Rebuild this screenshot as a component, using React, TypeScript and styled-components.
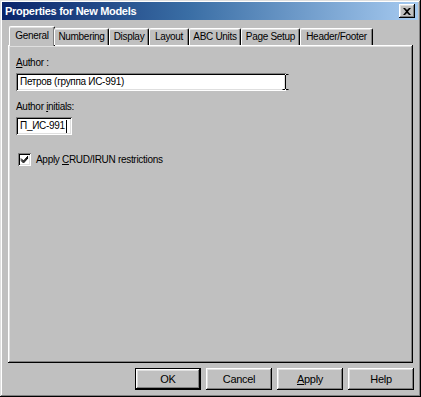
import React from "react";
import styled, { createGlobalStyle } from "styled-components";

const GlobalStyle = createGlobalStyle`
  html, body {
    margin: 0;
    padding: 0;
    background: #c0c0c0;
  }
  * {
    box-sizing: border-box;
  }
`;

const tabs = [
  { label: "General", width: 44 },
  { label: "Numbering", width: 55 },
  { label: "Display", width: 40 },
  { label: "Layout", width: 40 },
  { label: "ABC Units", width: 52 },
  { label: "Page Setup", width: 59 },
  { label: "Header/Footer", width: 73 },
];

export default function App() {
  return (
    <>
      <GlobalStyle />
      <Window>
        <TitleBar>
          <Title>Properties for New Models</Title>
          <CloseButton>
            <svg width="8" height="7" viewBox="0 0 8 7">
              <path
                d="M0 0h2l2 2 2-2h2L5 3.5 8 7H6L4 5 2 7H0l3-3.5z"
                fill="#000"
              />
            </svg>
          </CloseButton>
        </TitleBar>
        <Body>
          <TabStrip>
            {tabs.map((t, i) => (
              <Tab key={t.label} $active={i === 0} $width={t.width}>
                {t.label}
              </Tab>
            ))}
          </TabStrip>
          <Panel>
            <Label>
              <u>A</u>uthor :
            </Label>
            <TextField $width={270}>
              Петров (группа ИС-991)
              <IBeam>
                <svg width="7" height="16" viewBox="0 0 7 16">
                  <path
                    d="M0.5 0.5h2.5M4 0.5h2.5M3.5 1v14M0.5 15.5h2.5M4 15.5h2.5"
                    stroke="#000"
                    strokeWidth="1"
                    fill="none"
                  />
                </svg>
              </IBeam>
            </TextField>
            <Label $top={10}>
              Author <u>i</u>nitials:
            </Label>
            <TextField $width={56}>
              П_ИС-991<Caret />
            </TextField>
            <CheckRow>
              <CheckBox>
                <svg width="9" height="9" viewBox="0 0 9 9">
                  <path
                    d="M1 3.5l2.5 2.5 4.5-5M1 4.5l2.5 2.5 4.5-5M1 5.5l2.5 2.5 4.5-5"
                    stroke="#000"
                    strokeWidth="1"
                    fill="none"
                  />
                </svg>
              </CheckBox>
              <span>
                Apply <u>C</u>RUD/IRUN restrictions
              </span>
            </CheckRow>
          </Panel>
          <ButtonRow>
            <Button $default>OK</Button>
            <Button>Cancel</Button>
            <Button>
              <u>A</u>pply
            </Button>
            <Button>Help</Button>
          </ButtonRow>
        </Body>
      </Window>
    </>
  );
}

const Window = styled.div`
  width: 421px;
  height: 397px;
  padding: 2px 3px 3px 2px;
  background: #c0c0c0;
  box-shadow: inset -1px -1px #000, inset 1px 1px #dfdfdf,
    inset -2px -2px #808080, inset 2px 2px #fff;
  font-family: "Liberation Sans", Arial, sans-serif;
  font-size: 10px;
  letter-spacing: -0.3px;
  color: #000;
  display: flex;
  flex-direction: column;
`;

const TitleBar = styled.div`
  height: 18px;
  display: flex;
  align-items: center;
  justify-content: space-between;
  padding: 0 3px 0 3px;
  background: linear-gradient(to right, #0a246a, #3a6ea5 45%, #a6caf0);
`;

const Title = styled.span`
  color: #fff;
  font-weight: bold;
  font-size: 11px;
  letter-spacing: -0.3px;
`;

const CloseButton = styled.div`
  width: 16px;
  height: 14px;
  display: flex;
  align-items: center;
  justify-content: center;
  background: #c0c0c0;
  box-shadow: inset -1px -1px #000, inset 1px 1px #fff,
    inset -2px -2px #808080, inset 2px 2px #dfdfdf;
`;

const Body = styled.div`
  flex: 1;
  display: flex;
  flex-direction: column;
  padding: 5px 4px 0 4px;
`;

const TabStrip = styled.div`
  display: flex;
  align-items: flex-end;
  height: 20px;
  padding-left: 4px;
  position: relative;
  z-index: 1;
`;

const Tab = styled.div<{ $active?: boolean; $width: number }>`
  width: ${(p) => p.$width + (p.$active ? 2 : 0)}px;
  height: ${(p) => (p.$active ? "20px" : "17px")};
  padding-top: ${(p) => (p.$active ? "3px" : "2px")};
  margin: ${(p) => (p.$active ? "0 -1px -1px -1px" : "0")};
  background: #c0c0c0;
  border-top: 1px solid #fff;
  border-left: 1px solid #fff;
  border-right: 1px solid #000;
  border-radius: 2px 2px 0 0;
  box-shadow: inset -1px 0 #808080, inset 0 1px #dfdfdf;
  display: flex;
  justify-content: center;
  align-items: flex-start;
  white-space: nowrap;
  line-height: 12px;
  font-size: 10px;
  letter-spacing: -0.3px;
`;

const Panel = styled.div`
  width: 405px;
  height: 318px;
  margin-left: 2px;
  padding: 12px 8px;
  background: #c0c0c0;
  box-shadow: inset -1px -1px #000, inset 1px 1px #fff,
    inset -2px -2px #808080, inset 2px 2px #dfdfdf;
  display: flex;
  flex-direction: column;
  align-items: flex-start;
`;

const Label = styled.div<{ $top?: number }>`
  margin-top: ${(p) => p.$top ?? 0}px;
  margin-bottom: 4px;
  line-height: 12px;
`;

const TextField = styled.div<{ $width: number }>`
  width: ${(p) => p.$width}px;
  height: 18px;
  padding: 2px 4px;
  background: #fff;
  box-shadow: inset 1px 1px #808080, inset -1px -1px #fff,
    inset 2px 2px #000, inset -2px -2px #dfdfdf;
  display: flex;
  align-items: center;
  position: relative;
  white-space: nowrap;
  line-height: 12px;
`;

const IBeam = styled.span`
  position: absolute;
  right: -3px;
  top: 1px;
  display: flex;
`;

const Caret = styled.span`
  width: 1px;
  height: 13px;
  background: #000;
  margin-left: 1px;
`;

const CheckRow = styled.div`
  margin-top: 18px;
  margin-left: 2px;
  display: flex;
  align-items: center;
  gap: 5px;
`;

const CheckBox = styled.div`
  width: 13px;
  height: 13px;
  background: #fff;
  box-shadow: inset 1px 1px #808080, inset -1px -1px #fff,
    inset 2px 2px #000, inset -2px -2px #dfdfdf;
  display: flex;
  align-items: center;
  justify-content: center;
`;

const ButtonRow = styled.div`
  display: flex;
  justify-content: flex-end;
  gap: 5px;
  padding: 5px 0 0 0;
`;

const Button = styled.div<{ $default?: boolean }>`
  width: 66px;
  height: 22px;
  display: flex;
  align-items: center;
  justify-content: center;
  background: #c0c0c0;
  border: ${(p) => (p.$default ? "1px solid #000" : "none")};
  box-shadow: inset -1px -1px #000, inset 1px 1px #fff,
    inset -2px -2px #808080, inset 2px 2px #dfdfdf;
  font-size: 11px;
  letter-spacing: -0.3px;
`;
